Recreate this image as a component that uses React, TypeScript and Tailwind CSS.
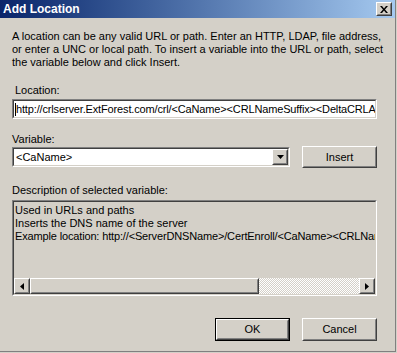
import React from "react";

function Raised({ className = "", innerClassName = "", children }: { className?: string; innerClassName?: string; children?: React.ReactNode }) {
  return (
    <div className={"border border-t-white border-l-white border-r-[#404040] border-b-[#404040] bg-[#d4d0c8] " + className}>
      <div className={"w-full h-full border border-t-[#d4d0c8] border-l-[#d4d0c8] border-r-[#808080] border-b-[#808080] " + innerClassName}>
        {children}
      </div>
    </div>
  );
}

function Sunken({ className = "", innerClassName = "", children }: { className?: string; innerClassName?: string; children?: React.ReactNode }) {
  return (
    <div className={"border border-t-[#808080] border-l-[#808080] border-r-white border-b-white " + className}>
      <div className={"w-full h-full border border-t-[#404040] border-l-[#404040] border-r-[#d4d0c8] border-b-[#d4d0c8] " + innerClassName}>
        {children}
      </div>
    </div>
  );
}

function Tri({ dir }: { dir: "down" | "left" | "right" }) {
  if (dir === "down")
    return (
      <svg width="7" height="4" viewBox="0 0 7 4">
        <path d="M0 0h7L3.5 4z" fill="#000" />
      </svg>
    );
  if (dir === "left")
    return (
      <svg width="4" height="7" viewBox="0 0 4 7">
        <path d="M4 0v7L0 3.5z" fill="#000" />
      </svg>
    );
  return (
    <svg width="4" height="7" viewBox="0 0 4 7">
      <path d="M0 0v7L4 3.5z" fill="#000" />
    </svg>
  );
}

export default function App() {
  return (
    <div className="w-[397px] h-[353px] bg-[#d4d0c8] font-['Liberation_Sans',Arial,sans-serif] text-[11px] text-black overflow-hidden">
      <div className="w-[396px] h-[352px] border-r border-b border-[#808080] flex flex-col">
        <div className="h-[18px] shrink-0 flex items-center justify-between bg-gradient-to-r from-[#0a246a] to-[#a6caf0] pl-[3px] pr-[3px]">
          <span className="text-white font-bold text-[12px] leading-none">Add Location</span>
          <Raised className="w-[16px] h-[14px]" innerClassName="flex items-center justify-center">
            <svg width="8" height="7" viewBox="0 0 8 7">
              <path d="M0 0h2l2 2.5L6 0h2L5 3.5 8 7H6L4 4.5 2 7H0l3-3.5z" fill="#000" />
            </svg>
          </Raised>
        </div>

        <div className="flex flex-col pl-[12px] pr-[19px]">
          <p className="mt-[12px] leading-[13px] whitespace-nowrap">
            A location can be any valid URL or path. Enter an HTTP, LDAP, file address,
            <br />
            or enter a UNC or local path. To insert a variable into the URL or path, select
            <br />
            the variable below and click Insert.
          </p>

          <div className="mt-[15px] leading-[13px] pl-[3px]">Location:</div>
          <Sunken className="mt-[2px] h-[20px] w-[365px]" innerClassName="bg-white flex items-center overflow-hidden">
            <span className="w-px h-[13px] bg-black ml-[1px] shrink-0" />
            <span className="whitespace-nowrap leading-[13px] tracking-[-0.15px]">
              http://crlserver.ExtForest.com/crl/&lt;CaName&gt;&lt;CRLNameSuffix&gt;&lt;DeltaCRLAllowed&gt;.crl
            </span>
          </Sunken>

          <div className="mt-[14px] leading-[13px]">Variable:</div>
          <div className="h-[22px] flex items-center">
            <Sunken className="h-[20px] w-[278px]" innerClassName="bg-white flex items-center">
              <span className="pl-[2px] flex-1 leading-[13px]">&lt;CaName&gt;</span>
              <Raised className="w-[16px] h-full" innerClassName="flex items-center justify-center">
                <Tri dir="down" />
              </Raised>
            </Sunken>
            <Raised className="ml-auto -mr-[1px] w-[75px] h-[22px]" innerClassName="flex items-center justify-center">
              <span className="leading-none">Insert</span>
            </Raised>
          </div>

          <div className="mt-[16px] leading-[13px]">Description of selected variable:</div>
          <Sunken className="mt-[3px] h-[96px] w-[365px]" innerClassName="bg-[#d4d0c8] flex flex-col overflow-hidden">
            <div className="flex-1 pt-[2px] pl-[1px] leading-[13px] whitespace-nowrap overflow-hidden">
              <div>Used in URLs and paths</div>
              <div>Inserts the DNS name of the server</div>
              <div className="tracking-[-0.15px]">Example location: http://&lt;ServerDNSName&gt;/CertEnroll/&lt;CaName&gt;&lt;CRLNameSuffix&gt;&lt;DeltaCRLAllowed&gt;.crl</div>
            </div>
            <div className="h-[16px] flex shrink-0">
              <Raised className="w-[16px] h-[16px] shrink-0" innerClassName="flex items-center justify-center">
                <Tri dir="left" />
              </Raised>
              <Raised className="w-[229px] h-[16px] shrink-0" />
              <div className="flex-1 bg-[image:repeating-conic-gradient(#ffffff_0_25%,#d4d0c8_0_50%)] bg-[length:2px_2px]" />
              <Raised className="w-[16px] h-[16px] shrink-0" innerClassName="flex items-center justify-center">
                <Tri dir="right" />
              </Raised>
            </div>
          </Sunken>

          <div className="mt-[22px] flex justify-end gap-[12px] -mr-[1px]">
            <div className="border border-black w-[75px] h-[23px]">
              <Raised className="w-full h-full" innerClassName="flex items-center justify-center">
                <span className="leading-none">OK</span>
              </Raised>
            </div>
            <Raised className="w-[75px] h-[23px]" innerClassName="flex items-center justify-center">
              <span className="leading-none">Cancel</span>
            </Raised>
          </div>
        </div>
      </div>
    </div>
  );
}
